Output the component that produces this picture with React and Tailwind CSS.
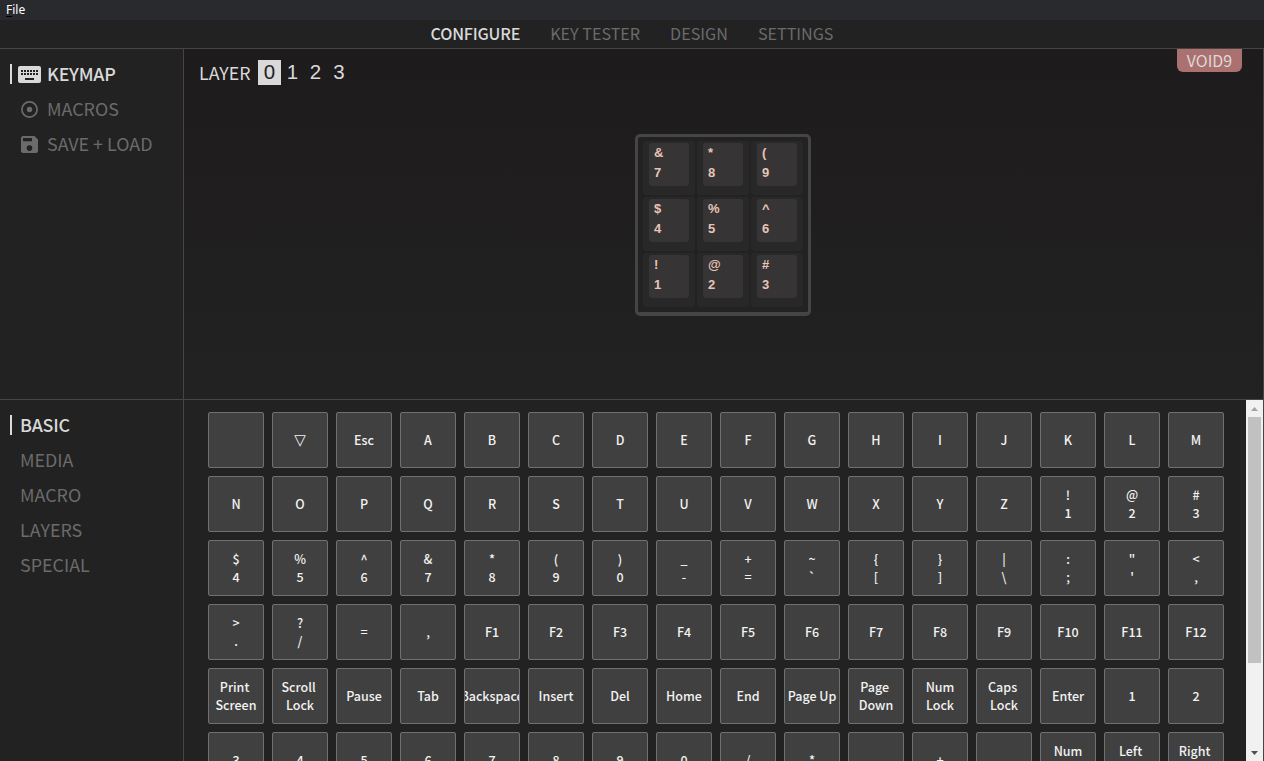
import React from 'react';

const KEYS = [
  '', '▽', 'Esc', 'A', 'B', 'C', 'D', 'E', 'F', 'G', 'H', 'I', 'J', 'K', 'L', 'M',
  'N', 'O', 'P', 'Q', 'R', 'S', 'T', 'U', 'V', 'W', 'X', 'Y', 'Z', '!\n1', '@\n2', '#\n3',
  '$\n4', '%\n5', '^\n6', '&\n7', '*\n8', '(\n9', ')\n0', '_\n-', '+\n=', '~\n`', '{\n[', '}\n]', '|\n\\', ':\n;', '"\n\'', '<\n,',
  '>\n.', '?\n/', '=', ',', 'F1', 'F2', 'F3', 'F4', 'F5', 'F6', 'F7', 'F8', 'F9', 'F10', 'F11', 'F12',
  'Print \nScreen', 'Scroll \nLock', 'Pause', 'Tab', 'Backspace', 'Insert', 'Del', 'Home', 'End', 'Page Up', 'Page \nDown', 'Num\nLock', 'Caps \nLock', 'Enter', '1', '2',
  '3', '4', '5', '6', '7', '8', '9', '0', '/', '*', '', '+', '.', 'Num\nEnter', 'Left \nShift', 'Right \nShift',
];

const CAPS = [['&', '7'], ['*', '8'], ['(', '9'], ['$', '4'], ['%', '5'], ['^', '6'], ['!', '1'], ['@', '2'], ['#', '3']];

function KeyboardIcon() {
  return (
    <svg className="h-[17px] w-[23px]" viewBox="0 0 23 17" fill="currentColor" fillRule="evenodd">
      <path d="M2 0h19a2 2 0 0 1 2 2v13a2 2 0 0 1-2 2H2a2 2 0 0 1-2-2V2a2 2 0 0 1 2-2zM3 4v2h2V4zM6 4v2h2V4zM9 4v2h2V4zM12 4v2h2V4zM15 4v2h2V4zM18 4v2h2V4zM3 7v2h2V7zM6 7v2h2V7zM9 7v2h2V7zM12 7v2h2V7zM15 7v2h2V7zM18 7v2h2V7zM7 12v2h9v-2z" />
    </svg>
  );
}

function DotIcon() {
  return (
    <svg className="h-[17px] w-[17px]" viewBox="0 0 17 17">
      <circle cx="8.500" cy="8.500" r="7.600" fill="none" stroke="currentColor" strokeWidth="1.700" />
      <circle cx="8.500" cy="8.500" r="2.700" fill="currentColor" />
    </svg>
  );
}

function SaveIcon() {
  return (
    <svg className="h-[17px] w-[17px]" viewBox="0 0 17 17" fill="currentColor" fillRule="evenodd">
      <path d="M2 0h11.500L17 3.500V15a2 2 0 0 1-2 2H2a2 2 0 0 1-2-2V2a2 2 0 0 1 2-2zM2 2v3.300h9V2zM8.500 9.300a2.800 2.800 0 1 0 0 5.600 2.800 2.800 0 0 0 0-5.600z" />
    </svg>
  );
}

function SideItem({ label, icon, active }) {
  return (
    <div className={`flex h-[35px] items-start pt-2 ${active ? 'text-[#d9d9d9]' : 'text-[#6b6b6b]'}`}>
      <div className={`ml-[10px] h-5 w-[2px] ${active ? 'bg-[#d9d9d9]' : ''}`} />
      {icon ? <div className="ml-[5px] mr-[5px] flex w-[25px] justify-center pt-[2px]">{icon}</div> : <div className="w-2" />}
      <span className={`text-[17.900px] leading-[19px] ${active ? 'font-medium tracking-[-0.250px]' : ''}`}>{label}</span>
    </div>
  );
}

export default function App() {
  return (
    <div className="flex h-[761px] w-[1264px] flex-col overflow-hidden bg-[#222222] font-['Noto_Sans_CJK_SC','Noto_Sans',sans-serif] text-[#d9d9d9]">
      <div className="h-5 shrink-0 bg-[#292a2d] pl-[6px] font-['Noto_Sans',sans-serif] text-[12px] leading-[20px] text-white">
        <span className="underline decoration-black underline-offset-2">F</span>ile
      </div>
      <div className="flex h-[29px] shrink-0 items-start justify-center gap-[30px] border-b border-[#454545] pt-[3px] text-[16.150px] leading-[20px] text-[#6b6b6b]">
        <span className="font-medium tracking-[-0.200px] text-[#d9d9d9]">CONFIGURE</span>
        <span>KEY TESTER</span>
        <span>DESIGN</span>
        <span>SETTINGS</span>
      </div>
      <div className="flex h-[351px] shrink-0 border-b border-[#454545]">
        <div className="w-[184px] shrink-0 border-r border-[#454545] pt-[7px]">
          <SideItem label="KEYMAP" icon={<KeyboardIcon />} active />
          <SideItem label="MACROS" icon={<DotIcon />} />
          <SideItem label="SAVE + LOAD" icon={<SaveIcon />} />
        </div>
        <div className="relative flex-1 border-r border-[#454545] bg-linear-to-b from-[#1e1b1c] to-[#222222]">
          <div className="flex items-start pl-[15px] pt-[11px]">
            <span className="w-[52px] text-[17.800px] leading-[24px]">LAYER</span>
            <div className="ml-[7px] flex font-['Liberation_Sans',sans-serif] text-[20.500px] leading-[24px]">
              <span className="h-[25px] w-[23px] bg-[#d9d9d9] text-center text-[#222222]">0</span>
              <span className="w-[23px] text-center">1</span>
              <span className="w-[23px] text-center">2</span>
              <span className="w-[24px] text-center">3</span>
            </div>
          </div>
          <div className="absolute right-[21px] top-0 h-[23px] w-[65px] rounded-b-[6px] bg-[#ab7070] text-center text-[16px] leading-[22px]">VOID9</div>
          <div className="ml-[451px] mt-[49px] h-[182px] w-[176px] rounded-[5px] border-[3px] border-b-4 border-[#454545] bg-[#222222] pl-[5px] pt-1">
            <div className="grid w-[160px] grid-cols-3 gap-[2px]">
              {CAPS.map(([a, b]) => (
                <div key={b} className="h-[54px] w-[52px] rounded-[3px] bg-[#282828] pl-[6px] pt-[2px]">
                  <div className="flex h-[43px] w-10 flex-col rounded-[3px] bg-[#363434] pl-[5px] font-['Liberation_Sans',sans-serif] text-[13px] font-bold leading-[20px] text-[#e8c4b8]">
                    <span>{a}</span>
                    <span>{b}</span>
                  </div>
                </div>
              ))}
            </div>
          </div>
        </div>
      </div>
      <div className="flex min-h-0 flex-1">
        <div className="w-[184px] shrink-0 border-r border-[#454545] pt-[7px]">
          <SideItem label="BASIC" active />
          <SideItem label="MEDIA" />
          <SideItem label="MACRO" />
          <SideItem label="LAYERS" />
          <SideItem label="SPECIAL" />
        </div>
        <div className="min-w-0 flex-1 overflow-hidden pl-6 pt-3">
          <div className="grid w-[1016px] grid-cols-16 gap-2">
            {KEYS.map((k, i) => (
              <div key={i} className="flex h-14 w-14 items-center justify-center overflow-hidden rounded-[2px] border border-[#707070] bg-[#404040] text-center text-[12.500px] font-medium leading-[18px] whitespace-pre text-[#f2f2f2]">
                {k === '▽' ? <span className="font-['DejaVu_Sans',sans-serif] text-[15px] font-bold">{k}</span> : k}
              </div>
            ))}
          </div>
        </div>
        <div className="flex w-[17px] shrink-0 flex-col items-center justify-between bg-[#f1f1f1]">
          <div className="flex h-[17px] items-center"><svg className="h-1 w-[7px]" viewBox="0 0 7 4"><path d="M0 4 3.500 0 7 4z" fill="#a3a3a3" /></svg></div>
          <div className="mb-auto h-[246px] w-[13px] bg-[#c1c1c1]" />
          <div className="flex h-[17px] items-center"><svg className="h-1 w-[7px]" viewBox="0 0 7 4"><path d="M0 0 3.500 4 7 0z" fill="#505050" /></svg></div>
        </div>
        <div className="w-px shrink-0 bg-[#454545]" />
      </div>
    </div>
  );
}
